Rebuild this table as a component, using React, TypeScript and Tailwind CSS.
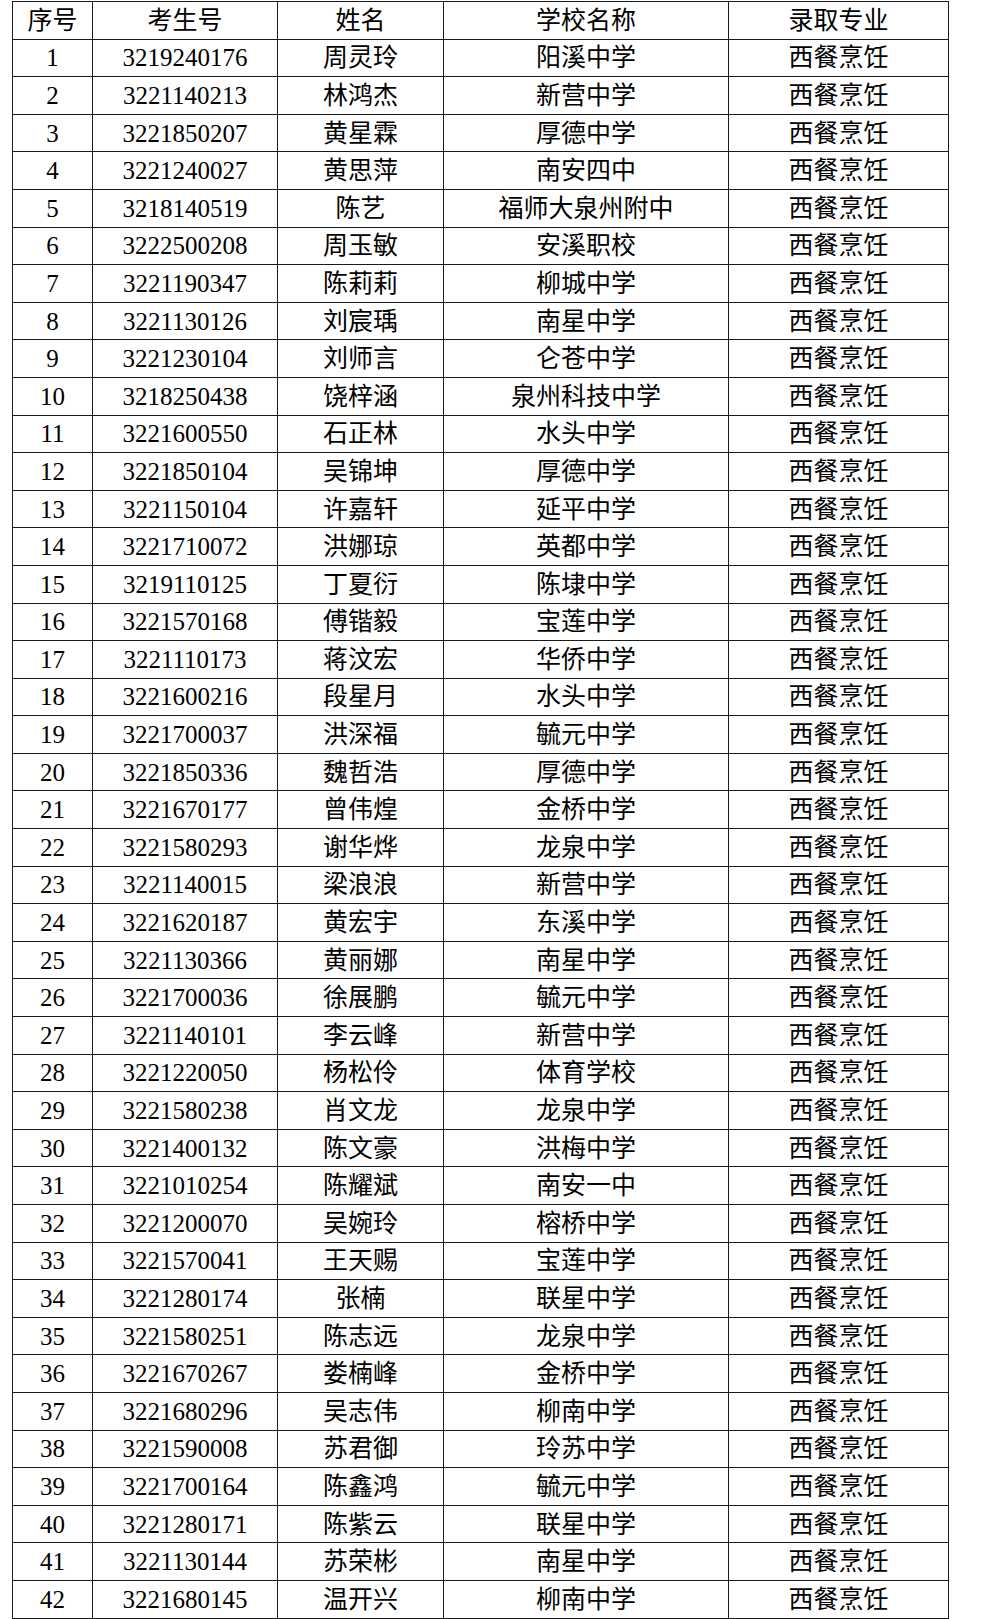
const rows: [string, string, string][] = [
  ['3219240176', '周灵玲', '阳溪中学'],
  ['3221140213', '林鸿杰', '新营中学'],
  ['3221850207', '黄星霖', '厚德中学'],
  ['3221240027', '黄思萍', '南安四中'],
  ['3218140519', '陈艺', '福师大泉州附中'],
  ['3222500208', '周玉敏', '安溪职校'],
  ['3221190347', '陈莉莉', '柳城中学'],
  ['3221130126', '刘宸瑀', '南星中学'],
  ['3221230104', '刘师言', '仑苍中学'],
  ['3218250438', '饶梓涵', '泉州科技中学'],
  ['3221600550', '石正林', '水头中学'],
  ['3221850104', '吴锦坤', '厚德中学'],
  ['3221150104', '许嘉轩', '延平中学'],
  ['3221710072', '洪娜琼', '英都中学'],
  ['3219110125', '丁夏衍', '陈埭中学'],
  ['3221570168', '傅锴毅', '宝莲中学'],
  ['3221110173', '蒋汶宏', '华侨中学'],
  ['3221600216', '段星月', '水头中学'],
  ['3221700037', '洪深福', '毓元中学'],
  ['3221850336', '魏哲浩', '厚德中学'],
  ['3221670177', '曾伟煌', '金桥中学'],
  ['3221580293', '谢华烨', '龙泉中学'],
  ['3221140015', '梁浪浪', '新营中学'],
  ['3221620187', '黄宏宇', '东溪中学'],
  ['3221130366', '黄丽娜', '南星中学'],
  ['3221700036', '徐展鹏', '毓元中学'],
  ['3221140101', '李云峰', '新营中学'],
  ['3221220050', '杨松伶', '体育学校'],
  ['3221580238', '肖文龙', '龙泉中学'],
  ['3221400132', '陈文豪', '洪梅中学'],
  ['3221010254', '陈耀斌', '南安一中'],
  ['3221200070', '吴婉玲', '榕桥中学'],
  ['3221570041', '王天赐', '宝莲中学'],
  ['3221280174', '张楠', '联星中学'],
  ['3221580251', '陈志远', '龙泉中学'],
  ['3221670267', '娄楠峰', '金桥中学'],
  ['3221680296', '吴志伟', '柳南中学'],
  ['3221590008', '苏君御', '玲苏中学'],
  ['3221700164', '陈鑫鸿', '毓元中学'],
  ['3221280171', '陈紫云', '联星中学'],
  ['3221130144', '苏荣彬', '南星中学'],
  ['3221680145', '温开兴', '柳南中学'],
]

const cell = 'border border-[#1a1a1a] text-center align-middle p-0 font-normal'

export default function App() {
  return (
    <div className="w-[1000px] bg-white pt-px pl-[12px] text-black font-['Liberation_Serif','Noto_Sans_CJK_SC',serif] text-[25px] leading-none">
      <table className="border-collapse table-fixed w-[936px]">
        <colgroup>
          <col className="w-[80px]" />
          <col className="w-[185px]" />
          <col className="w-[166px]" />
          <col className="w-[285px]" />
          <col className="w-[220px]" />
        </colgroup>
        <thead>
          <tr className="h-[37.6px]">
            <th className={cell}>序号</th>
            <th className={cell}>考生号</th>
            <th className={cell}>姓名</th>
            <th className={cell}>学校名称</th>
            <th className={cell}>录取专业</th>
          </tr>
        </thead>
        <tbody>
          {rows.map(([id, name, school], i) => (
            <tr key={id} className="h-[37.6px]">
              <td className={cell}>{i + 1}</td>
              <td className={cell}>{id}</td>
              <td className={cell}>{name}</td>
              <td className={cell}>{school}</td>
              <td className={cell}>西餐烹饪</td>
            </tr>
          ))}
        </tbody>
      </table>
    </div>
  )
}
